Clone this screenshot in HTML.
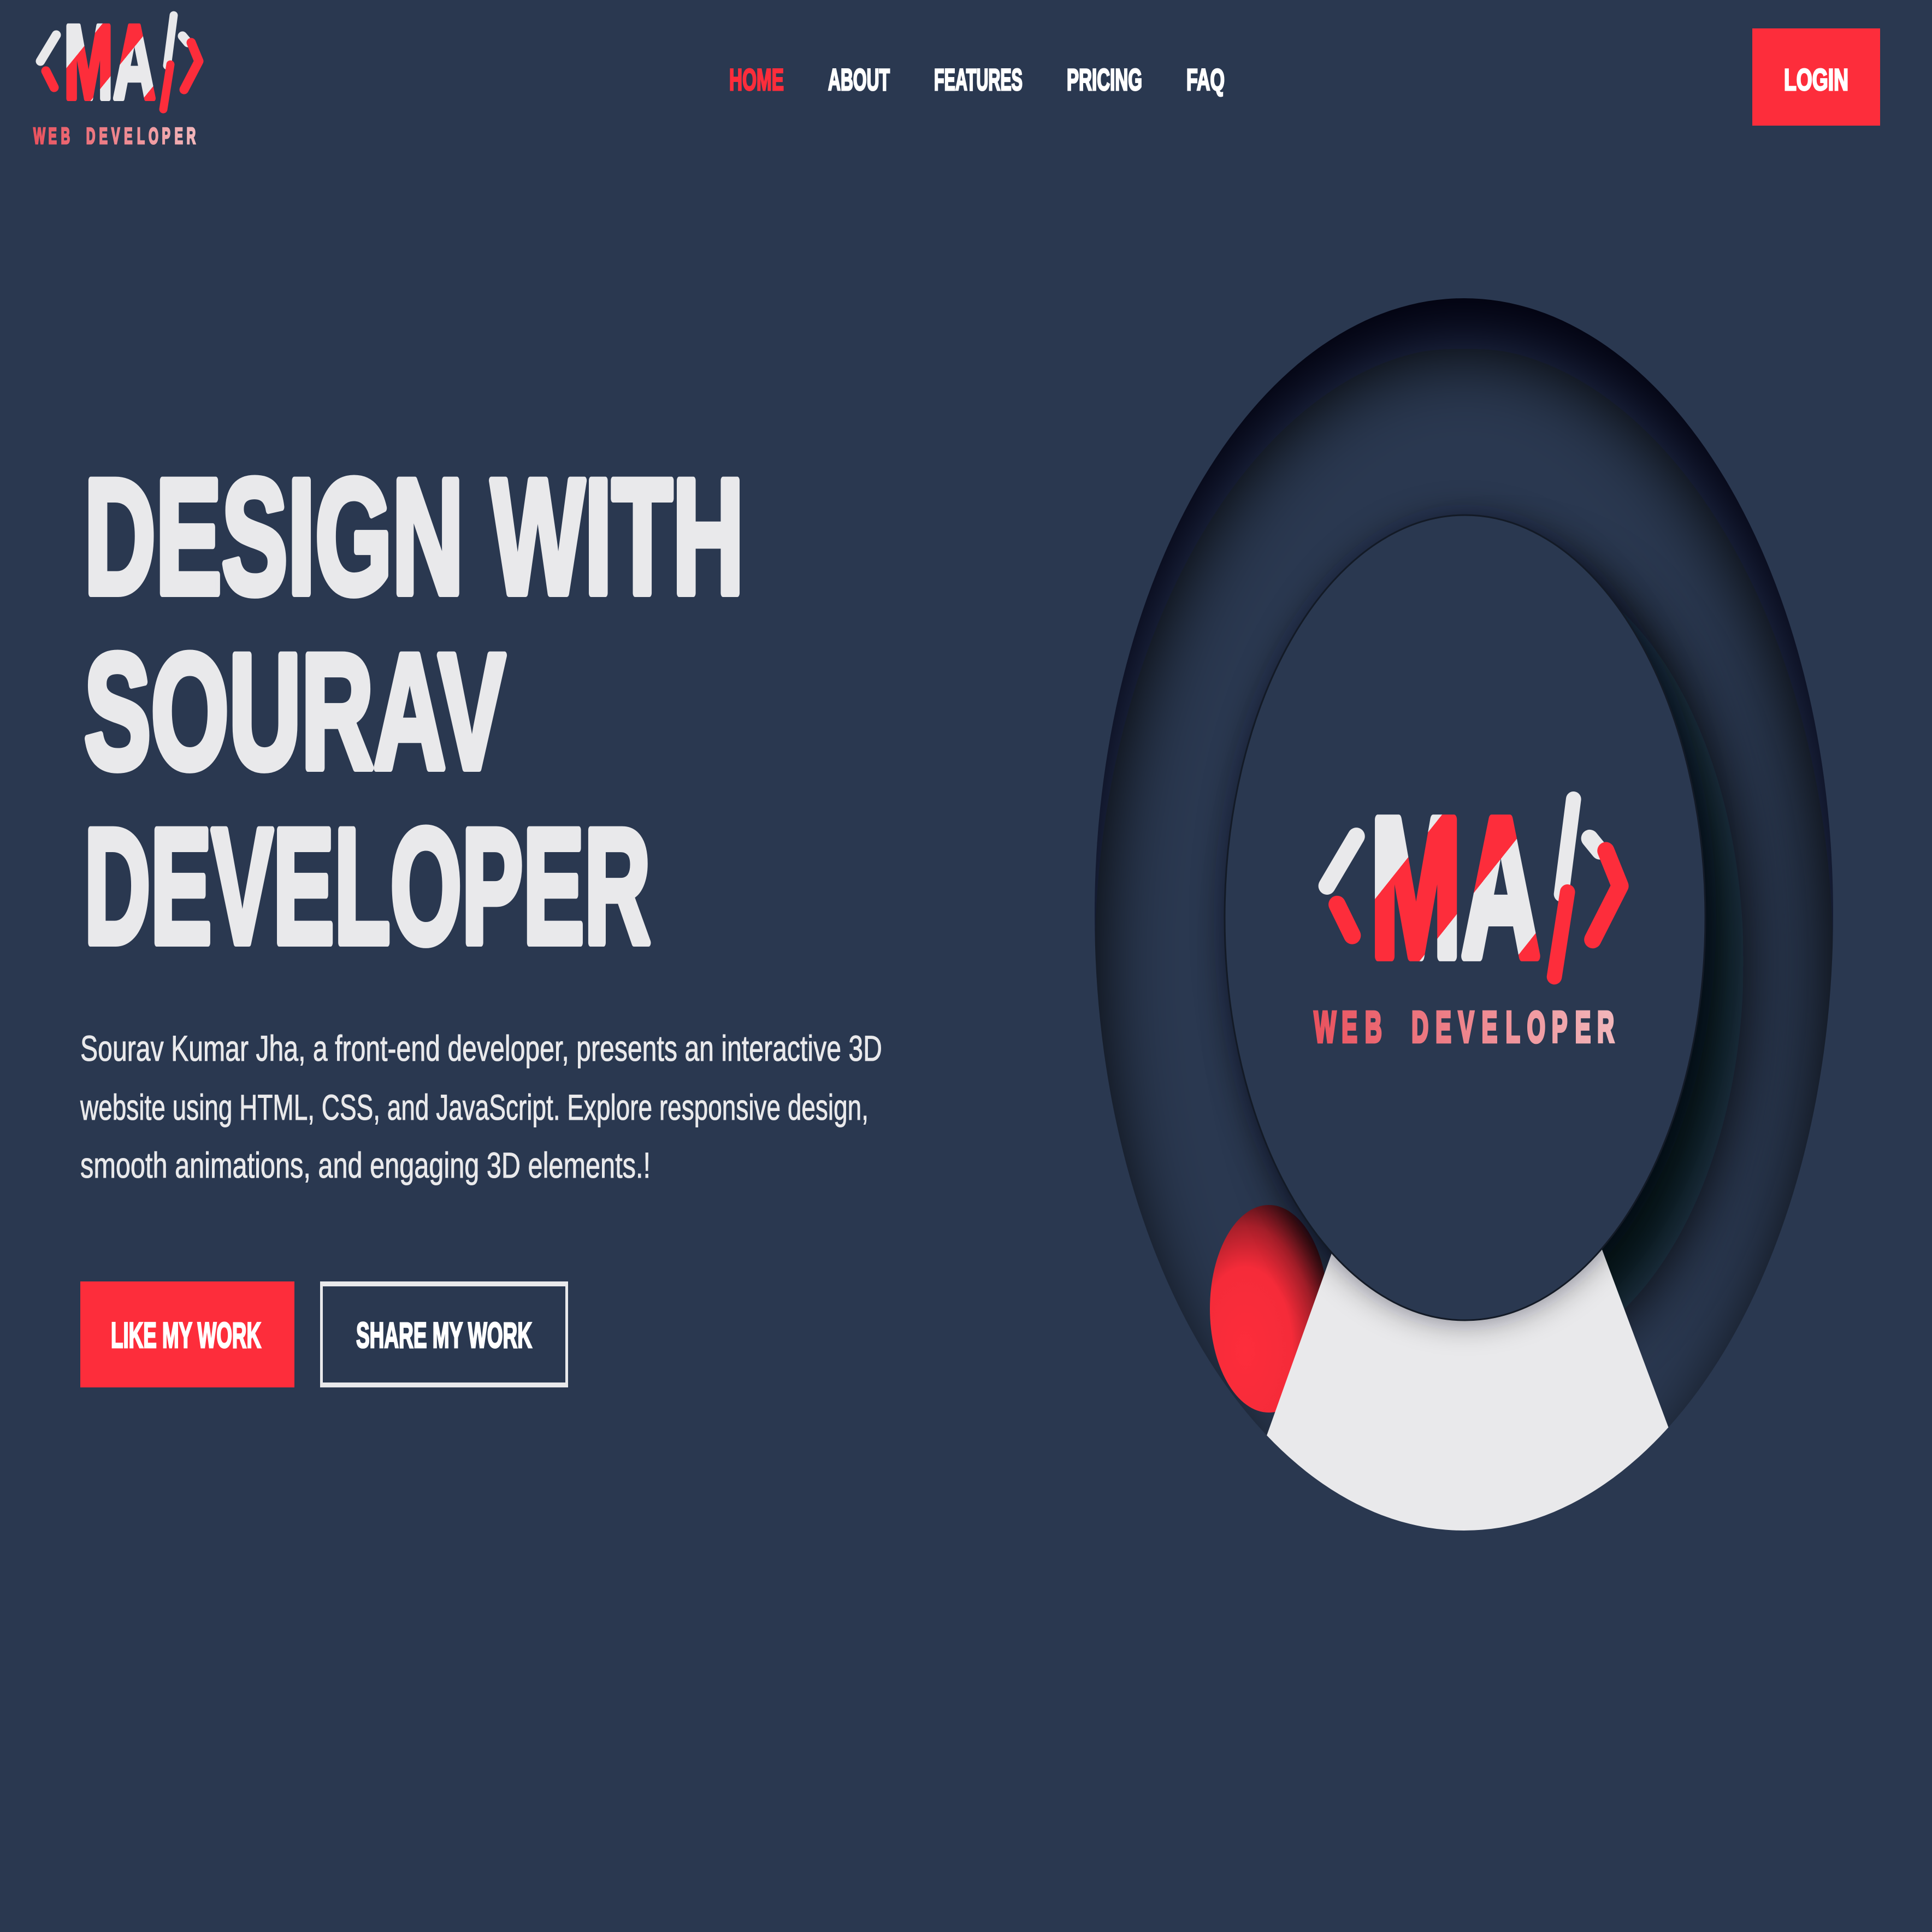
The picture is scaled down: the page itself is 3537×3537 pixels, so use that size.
<!DOCTYPE html>
<html><head><meta charset="utf-8"><style>
html,body{margin:0;padding:0}
body{width:3537px;height:3537px;background:#2a3850;position:relative;overflow:hidden;font-family:"Liberation Sans",sans-serif}
.btn1{position:absolute;left:147px;top:2346px;width:392px;height:194px;background:#fd2d3b}
.btn2{position:absolute;left:586px;top:2346px;width:444px;height:176px;border:9px solid #e9e9eb;border-left-width:5px;border-right-width:5px}
.login{position:absolute;left:3208px;top:52px;width:234px;height:178px;background:#fd2d3b}
svg{position:absolute;left:0;top:0;z-index:10}
.b{font-weight:700;font-family:"Liberation Sans",sans-serif}
</style></head><body>
<div class="login"></div>
<div class="btn1"></div>
<div class="btn2"></div>
<svg width="3537" height="3537" viewBox="0 0 3537 3537">
<defs>
<clipPath id="oc"><ellipse cx="2680" cy="1674" rx="676" ry="1128"/></clipPath>
<filter id="bl" x="-50%" y="-50%" width="200%" height="200%"><feGaussianBlur stdDeviation="70"/></filter>
<filter id="bl3" x="-50%" y="-50%" width="200%" height="200%"><feGaussianBlur stdDeviation="55"/></filter>
<filter id="bl2" x="-50%" y="-50%" width="200%" height="200%"><feGaussianBlur stdDeviation="30"/></filter>
<radialGradient id="ballg" cx="0.3" cy="0.7" r="0.8">
<stop offset="0" stop-color="#fd2d3b"/><stop offset=".5" stop-color="#f52b39"/><stop offset=".75" stop-color="#a81f2a"/><stop offset="1" stop-color="#2a0c12"/></radialGradient>
<linearGradient id="ma" gradientUnits="userSpaceOnUse" x1="125" y1="55" x2="285" y2="185">
<stop offset="0" stop-color="#e9e9eb"/><stop offset=".2" stop-color="#e9e9eb"/><stop offset=".2" stop-color="#fd2d3b"/>
<stop offset=".55" stop-color="#fd2d3b"/><stop offset=".55" stop-color="#e9e9eb"/><stop offset=".9" stop-color="#e9e9eb"/>
<stop offset=".9" stop-color="#fd2d3b"/><stop offset="1" stop-color="#fd2d3b"/></linearGradient>
<linearGradient id="wd" gradientUnits="userSpaceOnUse" x1="113" y1="0" x2="660" y2="0">
<stop offset="0" stop-color="#e9525e"/><stop offset="1" stop-color="#f2b8bc"/></linearGradient>
<g id="logo">
<path d="M103 64 L74 112" stroke="#e9e9eb" stroke-width="17" stroke-linecap="round" fill="none"/>
<path d="M84 130 L99 160" stroke="#fd2d3b" stroke-width="17" stroke-linecap="round" fill="none"/>
<text class="b" x="117" y="180" font-size="192" textLength="168" lengthAdjust="spacingAndGlyphs" fill="url(#ma)" stroke="url(#ma)" stroke-width="10" stroke-linejoin="round">MA</text>
<path d="M318 28 L306 120" stroke="#e9e9eb" stroke-width="15" stroke-linecap="round" fill="none"/>
<path d="M312 118 L299 200" stroke="#fd2d3b" stroke-width="15" stroke-linecap="round" fill="none"/>
<path d="M334 66 L344 78" stroke="#e9e9eb" stroke-width="17" stroke-linecap="round" fill="none"/>
<path d="M350 78 L364 112 L337 164" stroke="#fd2d3b" stroke-width="17" stroke-linecap="round" stroke-linejoin="round" fill="none"/>
<g transform="scale(0.55,1)" fill="url(#wd)" stroke="url(#wd)" stroke-width="3">
<text class="b" font-size="42" y="263" text-anchor="middle" x="131 175 218 302 344 385 427 469 511 553 595 636">WEBDEVELOPER</text>
</g>
</g>
</defs>

<g clip-path="url(#oc)">
<ellipse cx="2680" cy="1674" rx="676" ry="1128" fill="#2a3850"/>
<ellipse cx="2680" cy="1674" rx="876" ry="1328" fill="none" stroke="#03060b" stroke-width="400" filter="url(#bl)" transform="translate(0,90)"/>
<ellipse cx="2212" cy="2056" rx="108" ry="190" transform="translate(111,340)" fill="url(#ballg)"/>
<ellipse cx="2722" cy="1720" rx="440" ry="737" fill="#05080e" opacity=".9" filter="url(#bl3)" transform="translate(30,40)"/>
<polygon points="2491,2146 2880,2146 3125,2802 2257,2802" fill="#e9e9eb"/>
<ellipse cx="2682" cy="1680" rx="440" ry="737" fill="#0a0f18" filter="url(#bl2)" opacity=".5"/>
<ellipse cx="2682" cy="1680" rx="440" ry="737" fill="#2a3850" stroke="#131a26" stroke-width="3"/>
</g>

<use href="#logo"/>
<use href="#logo" transform="translate(2409,1448) scale(1.85,1.89) translate(-63,-20)"/>
<g class="b" font-size="56" stroke-width="3">
<text class="b" x="1335" y="165" fill="#fd2d3b" stroke="#fd2d3b" textLength="100" lengthAdjust="spacingAndGlyphs">HOME</text>
<text class="b" x="1516" y="165" fill="#fff" stroke="#fff" textLength="113" lengthAdjust="spacingAndGlyphs">ABOUT</text>
<text class="b" x="1710" y="165" fill="#fff" stroke="#fff" textLength="162" lengthAdjust="spacingAndGlyphs">FEATURES</text>
<text class="b" x="1953" y="165" fill="#fff" stroke="#fff" textLength="138" lengthAdjust="spacingAndGlyphs">PRICING</text>
<text class="b" x="2172" y="165" fill="#fff" stroke="#fff" textLength="70" lengthAdjust="spacingAndGlyphs">FAQ</text>
<text class="b" x="3266" y="165" fill="#fff" stroke="#fff" textLength="118" lengthAdjust="spacingAndGlyphs">LOGIN</text>
<text class="b" x="203" y="2467" fill="#fff" stroke="#fff" font-size="66" textLength="275" lengthAdjust="spacingAndGlyphs">LIKE MY WORK</text>
<text class="b" x="652" y="2467" fill="#fff" stroke="#fff" font-size="66" textLength="322" lengthAdjust="spacingAndGlyphs">SHARE MY WORK</text>
</g>
<g class="b" font-size="300" fill="#e9e9eb" stroke="#e9e9eb" stroke-width="14" stroke-linejoin="round">
<text class="b" x="154" y="1086" textLength="1208" lengthAdjust="spacingAndGlyphs">DESIGN WITH</text>
<text class="b" x="154" y="1406" textLength="771" lengthAdjust="spacingAndGlyphs">SOURAV</text>
<text class="b" x="154" y="1726" textLength="1037" lengthAdjust="spacingAndGlyphs">DEVELOPER</text>
</g>
<g font-size="66" fill="#e9e9eb" stroke="#e9e9eb" stroke-width="1" font-family="Liberation Sans, sans-serif">
<text x="147" y="1942" textLength="1468" lengthAdjust="spacingAndGlyphs">Sourav Kumar Jha, a front-end developer, presents an interactive 3D</text>
<text x="147" y="2050" textLength="1443" lengthAdjust="spacingAndGlyphs">website using HTML, CSS, and JavaScript. Explore responsive design,</text>
<text x="147" y="2156" textLength="1044" lengthAdjust="spacingAndGlyphs">smooth animations, and engaging 3D elements.!</text>
</g>
</svg>
</body></html>
